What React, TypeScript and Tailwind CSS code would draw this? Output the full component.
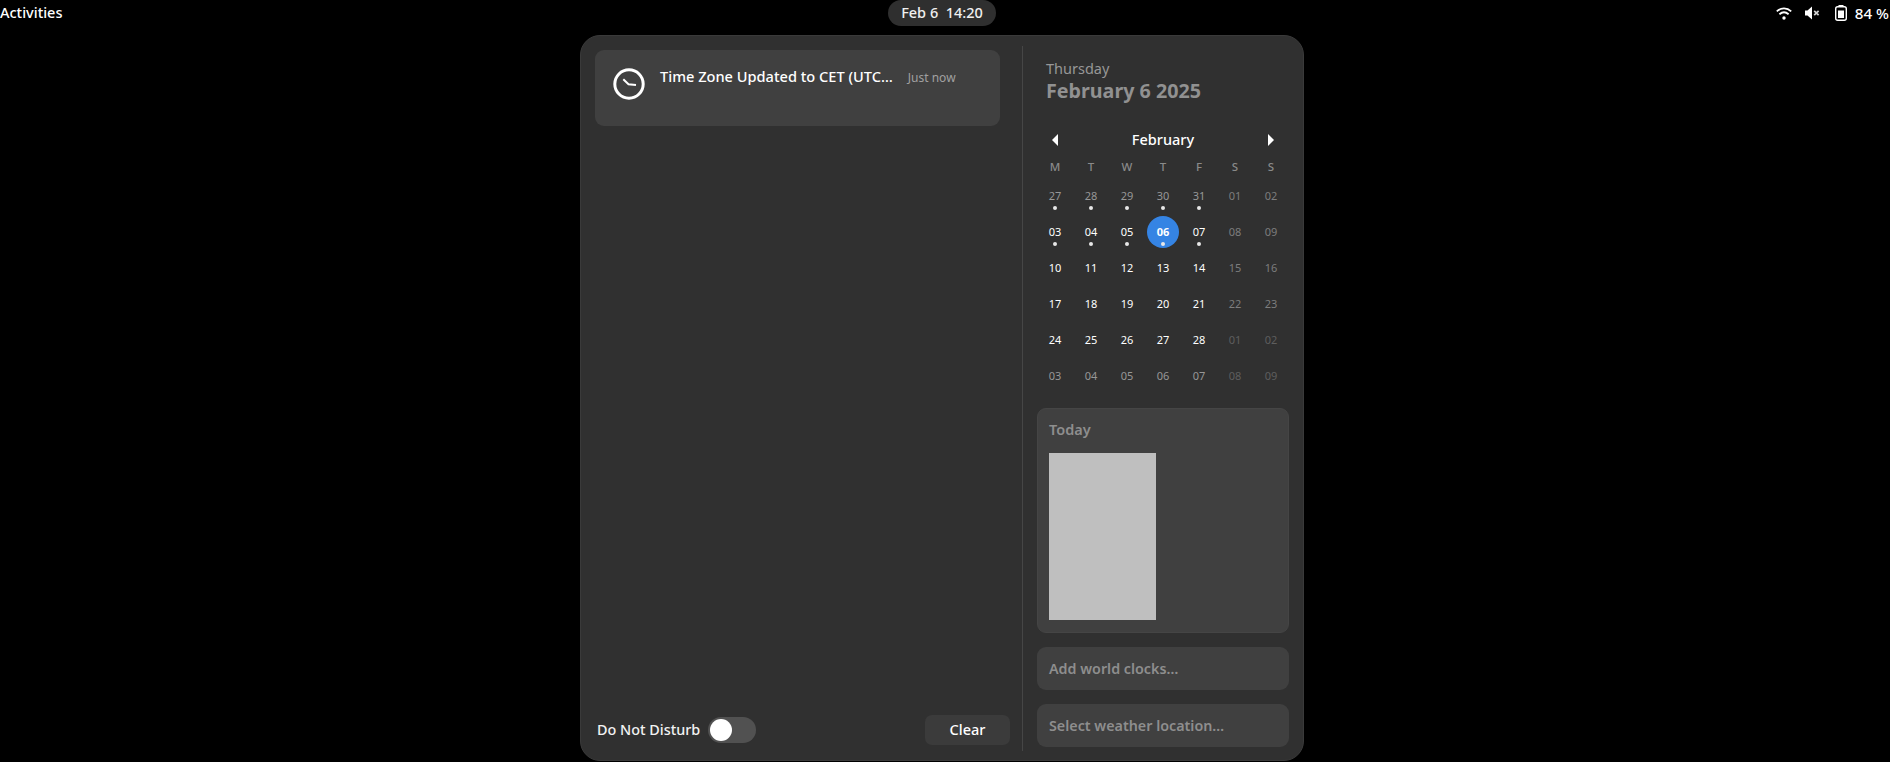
// ── Calendar data ─────────────────────────────────────────────────

type Day = { label: string; tone: string; dot?: boolean; today?: boolean };

const weekdays = ['M', 'T', 'W', 'T', 'F', 'S', 'S'];

const bright = 'text-[#ffffff]';
const otherWeekday = 'text-[#979797]';
const weekendCurrent = 'text-[#7d7d7d]';
const weekendOther = 'text-[#5e5e5e]';

const row = (labels: string[], weekdayTone: string, weekendTone: string, dots = false): Day[] =>
  labels.map((label, i) => ({
    label,
    tone: i < 5 ? weekdayTone : weekendTone,
    dot: dots && i < 5,
  }));

const weeks: Day[][] = [
  row(['27', '28', '29', '30', '31', '01', '02'], otherWeekday, weekendCurrent, true),
  row(['03', '04', '05', '06', '07', '08', '09'], bright, weekendCurrent, true).map((d) =>
    d.label === '06' ? { ...d, today: true } : d,
  ),
  row(['10', '11', '12', '13', '14', '15', '16'], bright, weekendCurrent),
  row(['17', '18', '19', '20', '21', '22', '23'], bright, weekendCurrent),
  row(['24', '25', '26', '27', '28', '01', '02'], bright, weekendOther),
  row(['03', '04', '05', '06', '07', '08', '09'], otherWeekday, weekendOther),
];

// ── Icons ─────────────────────────────────────────────────────────

function WifiIcon() {
  return (
    <svg width="16" height="16" viewBox="0 0 16 16" fill="none" stroke="#fff" strokeWidth="1.8">
      <path d="M0.8 6.4C5 2.4 11 2.4 15.2 6.4" />
      <path d="M3.4 9.2C6.2 6.8 9.8 6.8 12.6 9.2" />
      <circle cx="8" cy="13" r="1.7" fill="#fff" stroke="none" />
    </svg>
  );
}

function MutedIcon() {
  return (
    <svg width="16" height="16" viewBox="0 0 16 16" fill="#fff">
      <path d="M1 5.5h2.5L8 1.5v13L3.5 10.5H1z" />
      <path d="M10.2 5.8l4.4 4.4M14.6 5.8l-4.4 4.4" stroke="#d0d0d0" strokeWidth="1.7" fill="none" />
    </svg>
  );
}

function BatteryIcon() {
  return (
    <svg width="16" height="18" viewBox="0 0 16 18" fill="none">
      <rect x="5.5" y="1" width="5" height="2" fill="#fff" />
      <rect x="2.7" y="2.7" width="10.6" height="13.6" rx="2" stroke="#fff" strokeWidth="1.4" />
      <rect x="5" y="6.5" width="6" height="7.5" fill="#fff" />
    </svg>
  );
}

function ClockIcon() {
  return (
    <svg width="32" height="32" viewBox="0 0 32 32" fill="none" stroke="#fff">
      <circle cx="16" cy="16" r="14.2" strokeWidth="3" />
      <path d="M10.3 11.3L15.5 16.3L23 17" strokeWidth="2" />
    </svg>
  );
}

function Caret({ left }: { left?: boolean }) {
  return (
    <svg width="6" height="12" viewBox="0 0 6 12" fill="#fff">
      <path d={left ? 'M6 0V12L0 6Z' : 'M0 0V12L6 6Z'} />
    </svg>
  );
}

// ── Component ─────────────────────────────────────────────────────

export default function App() {
  return (
    <div className="h-[762px] w-[1890px] overflow-hidden bg-black font-['Noto_Sans',sans-serif] text-white">
      {/* Top bar */}
      <div className="flex h-[35px] items-start">
        <div className="w-[888px] pt-[2px] text-[14.5px] font-medium leading-[20px]">Activities</div>
        <div className="flex h-[26px] w-[108px] items-center justify-center rounded-full bg-[#2f2f2f] text-[14.5px] font-medium text-[#f0f0f0]">
          Feb 6&nbsp;&nbsp;14:20
        </div>
        <div className="ml-auto flex h-[26px] items-center">
          <WifiIcon />
          <div className="ml-[12px] flex">
            <MutedIcon />
          </div>
          <div className="ml-[13px] flex">
            <BatteryIcon />
          </div>
          <span className="ml-[6px] mr-[1px] text-[15.2px] font-medium">84 %</span>
        </div>
      </div>

      {/* Popover */}
      <div className="ml-[580px] flex h-[726px] w-[724px] rounded-[20px] border border-[#3a3a3a] bg-[#303030]">
        {/* Notifications column */}
        <div className="flex w-[441px] flex-col pb-[15px] pl-[14px] pt-[14px]">
          <div className="flex h-[76px] w-[405px] items-start rounded-[9px] bg-[#404040] pl-[18px] pt-[18px]">
            <ClockIcon />
            <span className="ml-[15px] mt-[-2px] whitespace-nowrap text-[14.6px] font-medium">
              Time Zone Updated to CET (UTC…
            </span>
            <span className="ml-[15px] mt-[1px] whitespace-nowrap text-[12px] text-[#a0a0a0]">Just now</span>
          </div>
          <div className="mt-auto flex items-center pl-[2px]">
            <span className="text-[14.4px] font-medium text-[#f2f2f2]">Do Not Disturb</span>
            <div className="ml-[8px] flex h-[26px] w-[48px] items-center rounded-full bg-[#515151] pl-[2px]">
              <div className="h-[22px] w-[22px] rounded-full bg-white" />
            </div>
            <button className="ml-auto mr-[12px] h-[30px] w-[85px] rounded-[7px] bg-[#3b3b3b] text-[14.5px] font-medium">
              Clear
            </button>
          </div>
        </div>

        {/* Divider */}
        <div className="mb-[9px] mt-[10px] w-px bg-[#464646]" />

        {/* Calendar column */}
        <div className="flex w-[266px] flex-col pl-[14px]">
          <div className="pl-[9px] pt-[22px] text-[14.5px] leading-[20px] text-[#979797]">Thursday</div>
          <div className="whitespace-nowrap pl-[9px] text-[19.7px] font-bold leading-[25px] text-[#919191]">February 6 2025</div>

          {/* Month header */}
          <div className="mt-[25px] flex h-[24px] w-[252px] items-center justify-between px-[15px]">
            <Caret left />
            <span className="text-[14.5px] font-medium">February</span>
            <Caret />
          </div>

          {/* Weekday labels */}
          <div className="mt-[3px] grid w-[252px] grid-cols-[repeat(7,36px)]">
            {weekdays.map((d, i) => (
              <div key={i} className="h-[24px] text-center text-[11.5px] font-medium leading-[24px] text-[#8a8a8a]">
                {d}
              </div>
            ))}
          </div>

          {/* Weeks */}
          <div className="mt-[-1px] grid w-[252px] grid-cols-[repeat(7,36px)]">
            {weeks.flat().map((d, i) => (
              <div key={i} className="relative flex h-[36px] items-center justify-center">
                {d.today && <div className="absolute h-[32px] w-[32px] rounded-full bg-[#3584e4]" />}
                <span className={`relative text-[11px] ${d.today ? 'font-bold text-white' : d.tone}`}>{d.label}</span>
                {d.dot && <div className="absolute bottom-[4px] h-[4px] w-[4px] rounded-full bg-[#e8e8e8]" />}
              </div>
            ))}
          </div>

          {/* Today */}
          <div className="mt-[14px] h-[225px] w-[252px] rounded-[9px] border border-[#454545] bg-[#404040] pl-[11px] pt-[10px]">
            <div className="text-[14.5px] font-semibold leading-[20px] text-[#8e8e8e]">Today</div>
            <div className="mt-[14px] h-[167px] w-[107px] bg-[#bfbfbf]" />
          </div>

          <div className="mt-[14px] flex h-[43px] w-[252px] items-center rounded-[9px] bg-[#404040] pl-[12px] text-[14.3px] font-semibold text-[#8e8e8e]">
            Add world clocks…
          </div>
          <div className="mt-[14px] flex h-[43px] w-[252px] items-center rounded-[9px] bg-[#404040] pl-[12px] text-[14.3px] font-semibold text-[#8e8e8e]">
            Select weather location…
          </div>
        </div>
      </div>
    </div>
  );
}
